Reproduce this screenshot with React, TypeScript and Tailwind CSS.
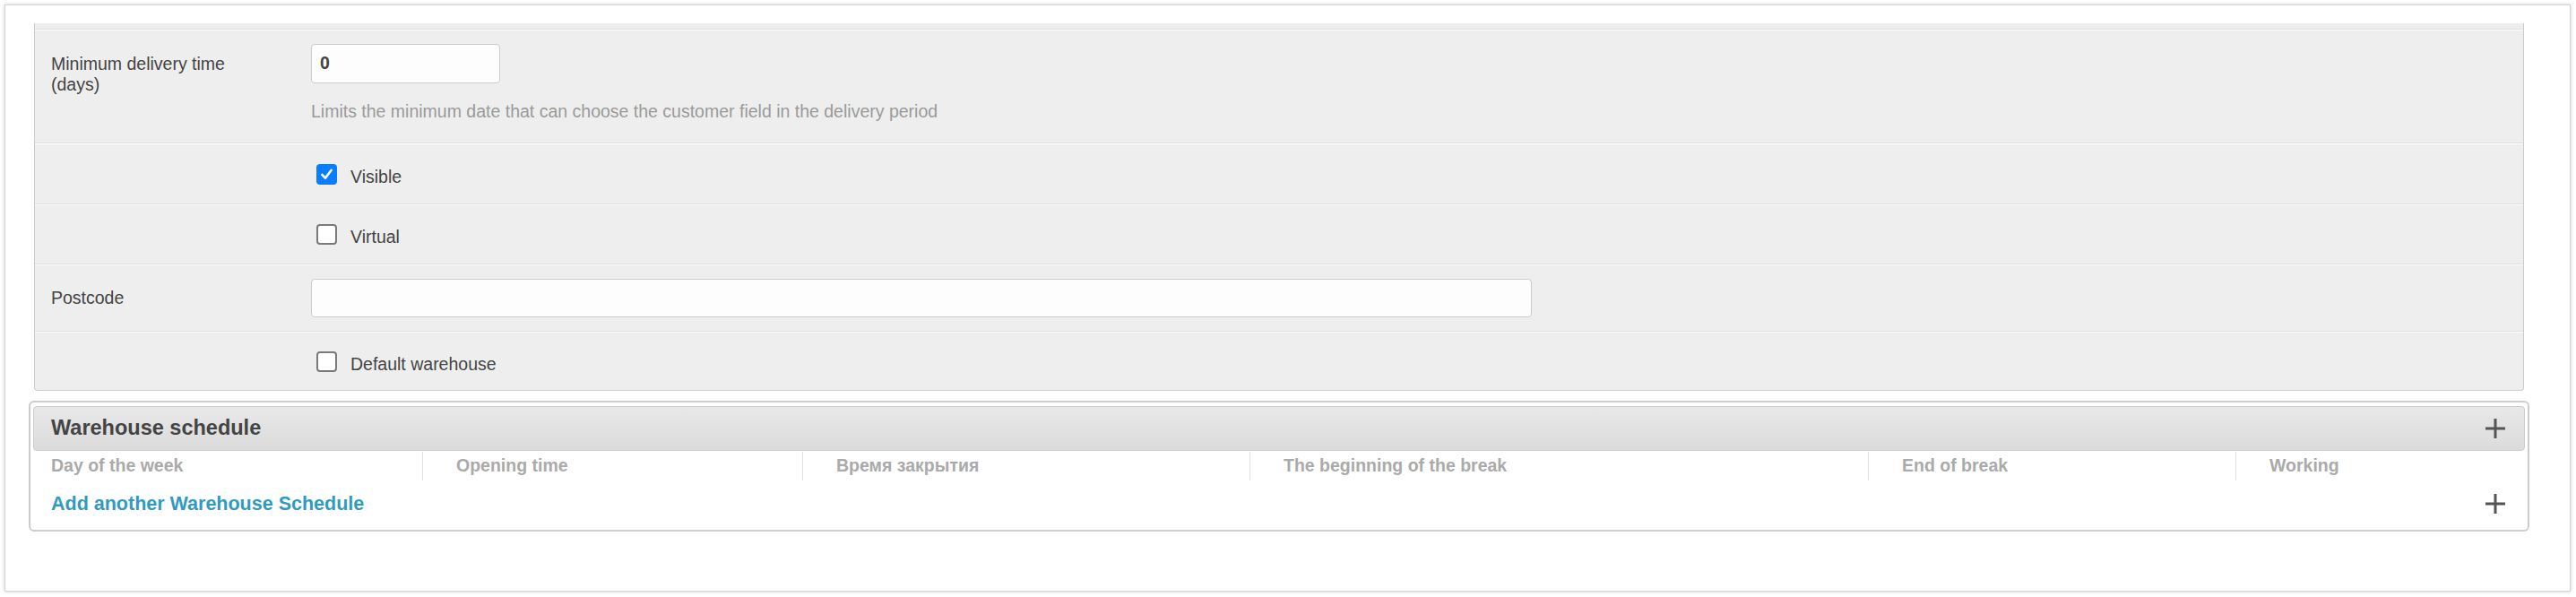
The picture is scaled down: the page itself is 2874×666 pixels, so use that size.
import React from "react";

const font = { fontFamily: '"Liberation Sans", Arial, Helvetica, sans-serif' };

function Plus() {
  return (
    <svg width="22" height="22" viewBox="0 0 22 22" className="shrink-0">
      <rect x="9.5" y="0" width="3" height="22" fill="#555" />
      <rect x="0" y="9.5" width="22" height="3" fill="#555" />
    </svg>
  );
}

function Checkbox({ checked }: { checked?: boolean }) {
  if (checked) {
    return (
      <span className="flex h-[23px] w-[23px] shrink-0 items-center justify-center rounded-[4px] bg-[#0b7bff]">
        <svg width="15" height="15" viewBox="0 0 16 16">
          <path d="M2.5 8.5 L6.3 12.5 L13.5 3" fill="none" stroke="#fff" strokeWidth="2.8" strokeLinecap="round" strokeLinejoin="round" />
        </svg>
      </span>
    );
  }
  return <span className="block h-[23px] w-[23px] shrink-0 rounded-[4px] border-2 border-[#7a7a7a] bg-white" />;
}

function CheckField({ label, checked }: { label: string; checked?: boolean }) {
  return (
    <div className="flex items-center gap-[15px] pl-[6px]">
      <Checkbox checked={checked} />
      <span className="pt-[7px] text-[19.5px] text-[#444]">{label}</span>
    </div>
  );
}

function CheckRow({ label, checked, h }: { label: string; checked?: boolean; h: string }) {
  return (
    <div className={`flex items-center border-t border-b border-t-white border-b-[#dedede] ${h}`}>
      <div className="w-[308px] shrink-0" />
      <CheckField label={label} checked={checked} />
    </div>
  );
}

const columns = [
  { name: "Day of the week", w: "w-[434px]", first: true },
  { name: "Opening time", w: "w-[424px]" },
  { name: "Время закрытия", w: "w-[499px]" },
  { name: "The beginning of the break", w: "w-[690px]" },
  { name: "End of break", w: "w-[410px]" },
  { name: "Working", w: "flex-1" },
];

export default function App() {
  return (
    <div className="h-[666px] w-[2874px] bg-white p-[5px]" style={font}>
      <div className="h-[655px] w-[2863px] border border-[#d4d4d4] bg-white pl-[26px] pr-[45px] pt-[20px] shadow-[0_0_4px_rgba(0,0,0,0.2)]">
        {/* fieldset panel */}
        <div className="mx-[6px] rounded-b-[4px] border-x border-b border-[#cccccc] bg-[#eeeeee]">
          <div className="h-[7px] border-b border-[#dedede]" />

          <div className="flex h-[127px] border-t border-b border-t-white border-b-[#dedede]">
            <div className="w-[308px] shrink-0 pl-[18px] pt-[26px] text-[19.5px] leading-[23px] text-[#444]">
              Minimum delivery time
              <br />
              (days)
            </div>
            <div className="pt-[15px]">
              <div className="flex h-[44px] w-[211px] items-center rounded-[4px] border border-[#cccccc] bg-[#fdfdfd] pl-[9px] text-[19.5px] font-bold text-[#444]">
                0
              </div>
              <div className="mt-[20px] text-[19.5px] leading-[23px] text-[#9a9a9a]">
                Limits the minimum date that can choose the customer field in the delivery period
              </div>
            </div>
          </div>

          <CheckRow label="Visible" checked h="h-[68px]" />
          <CheckRow label="Virtual" h="h-[67px]" />

          <div className="flex h-[75px] items-center border-t border-b border-t-white border-b-[#dedede]">
            <div className="w-[308px] shrink-0 pl-[18px] text-[19.5px] text-[#444]">Postcode</div>
            <div className="h-[43px] w-[1362px] rounded-[4px] border border-[#cccccc] bg-[#fdfdfd]" />
          </div>

          <div className="flex h-[65px] items-center border-t border-t-white">
            <div className="w-[308px] shrink-0" />
            <CheckField label="Default warehouse" />
          </div>
        </div>

        {/* inline group */}
        <div className="mt-[11px] h-[146px] rounded-[6px] border-2 border-[#cccccc] px-[3px] pt-[4px]">
          <div className="flex h-[50px] items-center justify-between rounded-[4px] border border-[#cccccc] bg-gradient-to-b from-[#e8e8e8] to-[#dbdbdb] pl-[19px] pr-[21px]">
            <span className="text-[23.5px] font-bold text-[#444]">Warehouse schedule</span>
            <Plus />
          </div>
          <div className="mt-[1px] flex h-[32px]">
            {columns.map((c) => (
              <div
                key={c.name}
                className={`${c.w} flex items-center text-[19.5px] font-bold text-[#aaaaaa] ${
                  c.first ? "pl-[20px]" : "border-l border-[#e2e2e2] pl-[37px]"
                }`}
              >
                {c.name}
              </div>
            ))}
          </div>
          <div className="flex h-[52px] items-center justify-between pl-[20px] pr-[22px]">
            <span className="text-[21.5px] font-bold text-[#309bbf]">Add another Warehouse Schedule</span>
            <Plus />
          </div>
        </div>
      </div>
    </div>
  );
}
